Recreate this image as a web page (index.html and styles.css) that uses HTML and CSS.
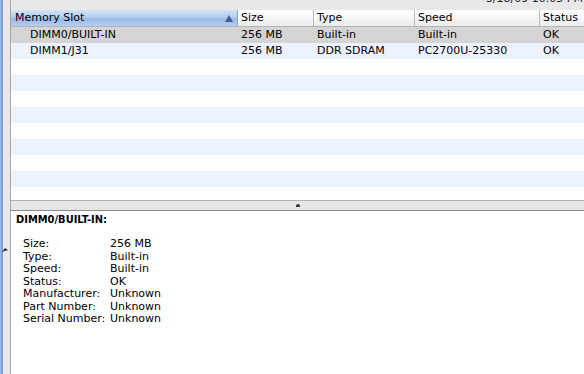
FILE: index.html
```html
<!DOCTYPE html>
<html lang="en">
<head>
  <meta charset="UTF-8">
  <title>Memory</title>
  <link rel="stylesheet" href="styles.css">
</head>
<body>

  <div class="sidebar-edge"></div>
  <div class="gutter">
    <svg class="gutter-grip" width="6" height="6" viewBox="0 0 6 6"><path d="M0 5 L3 1 L6 3 Z" fill="#333"/></svg>
  </div>

  <div class="main">
    <div class="topbar"><span class="stamp">3/18/09 10:05 PM</span></div>

    <div class="table">
      <div class="head">
        <div class="hcell sorted">Memory Slot<span class="sort-arrow"></span></div>
        <div class="hcell">Size</div>
        <div class="hcell">Type</div>
        <div class="hcell">Speed</div>
        <div class="hcell last">Status</div>
      </div>
      <div class="row selected">
        <div class="cell first">DIMM0/BUILT-IN</div>
        <div class="cell">256 MB</div>
        <div class="cell">Built-in</div>
        <div class="cell">Built-in</div>
        <div class="cell">OK</div>
      </div>
      <div class="row">
        <div class="cell first">DIMM1/J31</div>
        <div class="cell">256 MB</div>
        <div class="cell">DDR SDRAM</div>
        <div class="cell">PC2700U-25330</div>
        <div class="cell">OK</div>
      </div>
      <div class="row"></div>
      <div class="row"></div>
      <div class="row"></div>
      <div class="row"></div>
      <div class="row"></div>
      <div class="row"></div>
      <div class="row"></div>
      <div class="row"></div>
      <div class="row"></div>
    </div>

    <div class="splitter"><span class="dimple"></span></div>

    <div class="detail">
      <div class="detail-title">DIMM0/BUILT-IN:</div>
      <div class="props">
        <span>Size:</span><span>256 MB</span>
        <span>Type:</span><span>Built-in</span>
        <span>Speed:</span><span>Built-in</span>
        <span>Status:</span><span>OK</span>
        <span>Manufacturer:</span><span>Unknown</span>
        <span>Part Number:</span><span>Unknown</span>
        <span>Serial Number:</span><span>Unknown</span>
      </div>
    </div>
  </div>

</body>
</html>
```

FILE: styles.css
```css
body {
  display: flex;
  height: 100vh;
  margin: 0;
  overflow: hidden;
  background: #e8e8e8;
  font-family: "DejaVu Sans", sans-serif;
  font-size: 11px;
  color: #000;
}
.sidebar-edge {
  width: 3px;
  background: linear-gradient(to right, #a8c2e8, #86a7da 40%, #7a9dd4);
}
.gutter {
  width: 7px;
  display: flex;
  flex-direction: column;
  padding-top: 247px;
  box-sizing: border-box;
}
.gutter-grip {
  margin-left: -1px;
}
.main {
  flex: 1;
  display: flex;
  flex-direction: column;
  border-left: 1px solid #a6a6a6;
  min-width: 0;
}
.topbar {
  height: 10px;
  overflow: hidden;
  display: flex;
  justify-content: flex-end;
  padding-right: 1px;
}
.stamp {
  display: block;
  margin-top: -8px;
  height: 13px;
  line-height: 13px;
  color: #222;
  white-space: nowrap;
}
.table {
  height: 190px;
  background: #fff;
  overflow: hidden;
}
.head, .row {
  display: grid;
  grid-template-columns: 227px 76px 101px 125px 1fr;
}
.head {
  height: 16px;
  border-bottom: 1px solid #b4b4b4;
  background: linear-gradient(#ffffff, #f6f6f6 50%, #ececec);
}
.hcell {
  position: relative;
  padding-left: 3px;
  line-height: 16px;
  border-right: 1px solid #b9b9b9;
  white-space: nowrap;
}
.hcell.last {
  border-right: 0;
}
.hcell.sorted {
  padding-left: 4px;
  background: linear-gradient(#d3e3f7, #b2cdef 45%, #98b9e8 55%, #b3cef1);
  border-right-color: #8ea8cc;
}
.sort-arrow {
  position: absolute;
  right: 4px;
  top: 5px;
  border-left: 4px solid transparent;
  border-right: 4px solid transparent;
  border-bottom: 7px solid #3f5f8f;
}
.row {
  height: 16px;
  line-height: 16px;
}
.row:nth-child(odd) {
  background: #edf3fe;
}
.row.selected {
  background: #d4d4d4;
}
.cell {
  padding-left: 3px;
  white-space: nowrap;
}
.cell.first {
  padding-left: 19px;
}
.splitter {
  height: 9px;
  border-top: 1px solid #b2b2b2;
  border-bottom: 1px solid #8a8a8a;
  background: #e6e6e6;
  display: flex;
  justify-content: center;
  align-items: center;
}
.dimple {
  width: 4px;
  height: 3px;
  border-radius: 2px 2px 0 0;
  background: #333;
}
.detail {
  flex: 1;
  background: #fff;
  padding: 2px 0 0 5px;
}
.detail-title {
  font-family: "DejaVu Sans Condensed", "DejaVu Sans", sans-serif;
  font-weight: bold;
  line-height: 13px;
}
.props {
  display: grid;
  grid-template-columns: 87px auto;
  grid-auto-rows: 12.5px;
  justify-content: start;
  line-height: 12.5px;
  margin-top: 12px;
  padding-left: 7px;
}
```
